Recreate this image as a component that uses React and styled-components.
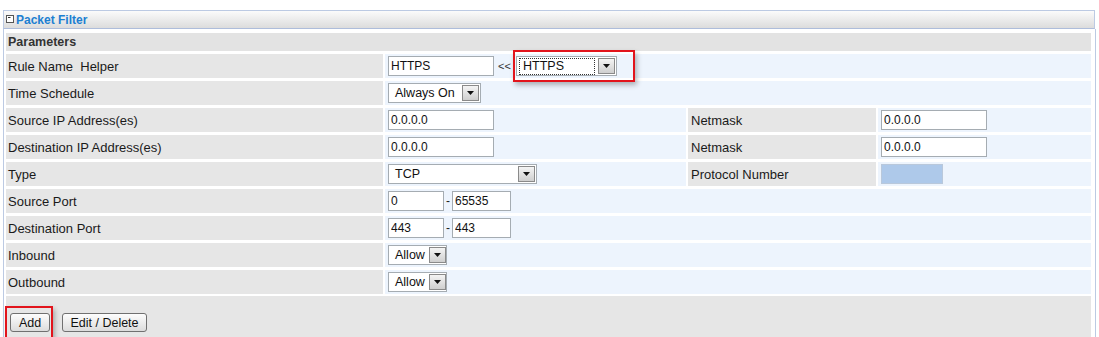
import React from "react";
import styled, { createGlobalStyle } from "styled-components";

const GlobalStyle = createGlobalStyle`
  body {
    margin: 0;
    background: #fff;
    font-family: "Liberation Sans", Arial, sans-serif;
    font-size: 12px;
    color: #1a1a1a;
  }
`;

const ROWS = [
  { label: "Rule Name  Helper", kind: "helper" },
  { label: "Time Schedule", kind: "select", value: "Always On", width: 93 },
  { label: "Source IP Address(es)", kind: "ip", side: "Netmask" },
  { label: "Destination IP Address(es)", kind: "ip", side: "Netmask" },
  { label: "Type", kind: "select", value: "TCP", width: 149, side: "Protocol Number" },
  { label: "Source Port", kind: "range", from: "0", to: "65535" },
  { label: "Destination Port", kind: "range", from: "443", to: "443" },
  { label: "Inbound", kind: "select", value: "Allow", width: 59 },
  { label: "Outbound", kind: "select", value: "Allow", width: 59 },
];

const Arrow = () => (
  <svg width="7" height="4" viewBox="0 0 7 4">
    <path d="M0 0h7L3.5 4z" fill="#111" />
  </svg>
);

const Select = ({ value, width, focused }) => (
  <SelectBox $width={width}>
    <SelectText $focused={focused}>{value}</SelectText>
    <DropButton>
      <Arrow />
    </DropButton>
  </SelectBox>
);

const CollapseIcon = () => (
  <svg width="8" height="8" viewBox="0 0 8 8">
    <rect x="0.5" y="0.5" width="7" height="7" fill="#fff" stroke="#555" />
    <path d="M2 2.5h2.5" stroke="#333" />
  </svg>
);

const renderValue = (row) => {
  if (row.kind === "helper") {
    return (
      <Inline>
        <TextInput $width={106} defaultValue="HTTPS" />
        <Sep>&lt;&lt;</Sep>
        <Highlight $inset="-6px -18px -6px -3px">
          <Select value="HTTPS" width={101} focused />
        </Highlight>
      </Inline>
    );
  }
  if (row.kind === "select") return <Select value={row.value} width={row.width} />;
  if (row.kind === "ip") return <TextInput $width={106} defaultValue="0.0.0.0" />;
  return (
    <Inline>
      <TextInput $width={56} defaultValue={row.from} />
      <Dash>-</Dash>
      <TextInput $width={59} defaultValue={row.to} />
    </Inline>
  );
};

const renderSide = (row) => {
  if (row.side === "Netmask") return <TextInput $width={106} defaultValue="0.0.0.0" />;
  return <ProtoBox />;
};

export default function App() {
  return (
    <>
      <GlobalStyle />
      <Panel>
        <Header>
          <CollapseIcon />
          <Title>Packet Filter</Title>
        </Header>
        <Body>
          <SectionRow>Parameters</SectionRow>
          {ROWS.map((row) => (
            <Row key={row.label}>
              <Label>{row.label}</Label>
              <Value $span={row.side ? 1 : 3}>{renderValue(row)}</Value>
              {row.side && (
                <>
                  <Label $indent={3}>{row.side}</Label>
                  <Value $span={1}>{renderSide(row)}</Value>
                </>
              )}
            </Row>
          ))}
          <Footer>
            <Highlight $inset="-7px -3px -9px -5px">
              <Button $width={40}>Add</Button>
            </Highlight>
            <Button $width={85}>Edit / Delete</Button>
          </Footer>
        </Body>
      </Panel>
    </>
  );
}

const Panel = styled.div`
  margin: 10px 4px 0 3px;
  width: 1092px;
`;

const Header = styled.div`
  height: 17px;
  display: flex;
  align-items: center;
  gap: 2px;
  padding-left: 2px;
  border: 1px solid #bccae3;
  border-bottom-color: #aebddb;
  background: linear-gradient(#fbfbfb, #dcdcdc);

  & > svg {
    margin-top: -2px;
  }
`;

const Title = styled.span`
  font-weight: bold;
  font-size: 12px;
  color: #1c7fd2;
`;

const Body = styled.div`
  width: 1089px;
  border-left: 1px solid #bccae3;
  border-right: 1px solid #bccae3;
  padding: 4px 0 0 2px;
  display: flex;
  flex-direction: column;
  gap: 3px;
`;

const SectionRow = styled.div`
  width: 1085px;
  height: 18px;
  display: flex;
  align-items: center;
  padding-left: 2px;
  box-sizing: border-box;
  background: #e3e3e3;
  font-weight: bold;
  font-size: 12.5px;
  color: #333;
`;

const Row = styled.div`
  width: 1085px;
  height: 24px;
  display: grid;
  grid-template-columns: 377px 301px 188px 1fr;
  column-gap: 2px;
`;

const Label = styled.div`
  background: #e6e6e6;
  display: flex;
  align-items: center;
  padding-left: ${(p) => p.$indent || 2}px;
  white-space: pre;
  font-size: 13px;
  color: #1a1a1a;
`;

const Value = styled.div`
  grid-column: span ${(p) => p.$span};
  background: #edf4fd;
  display: flex;
  align-items: center;
  padding-left: 3px;
`;

const Inline = styled.div`
  display: flex;
  align-items: center;
`;

const TextInput = styled.input`
  width: ${(p) => p.$width}px;
  height: 20px;
  box-sizing: border-box;
  border: 1px solid #a5acb2;
  background: #fff;
  font-family: "Liberation Sans", Arial, sans-serif;
  font-size: 12px;
  color: #111;
  padding: 0 2px;
  margin: 0;
  outline: none;
`;

const Sep = styled.span`
  width: 22px;
  padding-left: 4px;
  box-sizing: border-box;
  font-size: 11px;
  color: #333;
`;

const Dash = styled.span`
  width: 8px;
  text-align: center;
  color: #222;
`;

const SelectBox = styled.div`
  width: ${(p) => p.$width}px;
  height: 20px;
  box-sizing: border-box;
  border: 1px solid #a5acb2;
  background: #fff;
  display: flex;
  align-items: center;
  justify-content: space-between;
  padding: 0 1px 0 2px;
`;

const SelectText = styled.span`
  padding: 1px 3px;
  flex: ${(p) => (p.$focused ? 1 : "none")};
  margin-right: ${(p) => (p.$focused ? "3px" : 0)};
  border: 1px dotted ${(p) => (p.$focused ? "#333" : "transparent")};
  font-size: 12.5px;
  color: #111;
  line-height: 13px;
`;

const DropButton = styled.span`
  width: 17px;
  height: 16px;
  box-sizing: border-box;
  border: 1px solid #8a8a8a;
  background: linear-gradient(#f4f4f4, #cfcfcf);
  display: flex;
  align-items: center;
  justify-content: center;
  flex: none;
`;

const ProtoBox = styled.div`
  width: 62px;
  height: 20px;
  box-sizing: border-box;
  border: 1px solid #b9c8db;
  background: #aec9ea;
`;

const Highlight = styled.span`
  position: relative;
  display: inline-flex;

  &::after {
    content: "";
    position: absolute;
    inset: ${(p) => p.$inset};
    border: 2px solid #e2141c;
    box-shadow: 2px 3px 5px rgba(0, 0, 0, 0.28);
    pointer-events: none;
  }
`;

const Footer = styled.div`
  width: 1085px;
  height: 43px;
  background: #e6e6e6;
  display: flex;
  align-items: flex-end;
  gap: 12px;
  padding: 0 0 7px 4px;
  box-sizing: border-box;
  margin-top: -1px;
`;

const Button = styled.button`
  width: ${(p) => p.$width}px;
  height: 19px;
  border: 1px solid #707070;
  border-radius: 3px;
  background: linear-gradient(#fdfdfd, #dcdcdc);
  font-family: "Liberation Sans", Arial, sans-serif;
  font-size: 12.5px;
  color: #111;
  padding: 0;
  margin: 0;
`;
